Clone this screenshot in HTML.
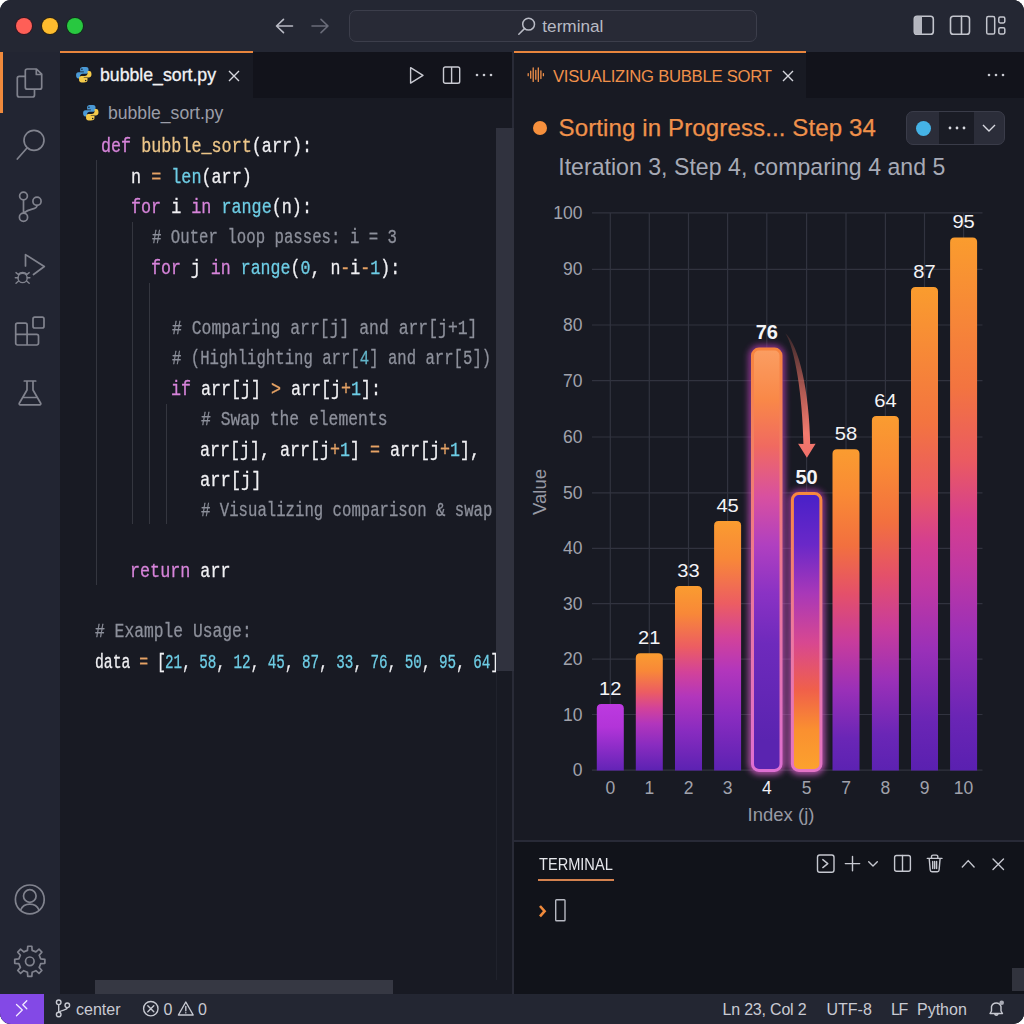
<!DOCTYPE html>
<html lang="en">
<head>
<meta charset="utf-8">
<title>bubble_sort.py — Visualizing Bubble Sort</title>
<style>
*{box-sizing:border-box;margin:0;padding:0}
html,body{width:1024px;height:1024px;background:#fff;overflow:hidden}
body{font-family:"Liberation Sans",sans-serif;color:#e8e8ec}
#win{position:absolute;left:0;top:0;width:1024px;height:1024px;background:#181a23;border-radius:11px;overflow:hidden}
.abs{position:absolute}
/* title bar */
#title{position:absolute;left:0;top:0;width:1024px;height:52px;background:#242733}
.tl{position:absolute;top:18px;width:16px;height:16px;border-radius:50%}
#search{position:absolute;left:349px;top:10px;width:408px;height:32px;border:1px solid #3c3e4b;border-radius:7px;background:#282a36}
#search span{position:absolute;left:192.300px;top:5px;font-size:17.200px;color:#b8bac4}
/* activity bar */
#act{position:absolute;left:0;top:52px;width:60px;height:942px;background:#222532}
#actind{position:absolute;left:0;top:52px;width:3px;height:61px;background:#f08a3c}
/* tab bars */
.tabbar{position:absolute;top:51.500px;height:46.500px;background:#12131b}
.tab{position:absolute;top:-.500px;height:47px;background:#181a23;border-top:2.500px solid #e8853d}
/* editor */
#edL{position:absolute;left:60px;top:98px;width:452px;height:896px;background:#181a23}
#mini{position:absolute;left:496px;top:127.500px;width:18px;height:543px;background:#30323e;z-index:2}
#split{position:absolute;left:511.800px;top:52px;width:2px;height:942px;background:#292b37}
#hscroll{position:absolute;left:95px;top:980px;width:298px;height:14px;background:#363843}
#edR{position:absolute;left:514px;top:98px;width:510px;height:742px;background:#181a23}
/* code */
.ln{position:absolute;white-space:pre;font-family:"Liberation Mono",monospace;font-size:20.500px;line-height:30px;height:30px;transform-origin:0 50%;transform:scaleX(.826);color:#f0f0f3;-webkit-text-stroke:.3px}
.k{color:#d784da}.f{color:#eec789}.o{color:#e6a365}.b{color:#6ecde5}.c{color:#8d909b}
.guide{position:absolute;width:1px;background:#34363f}
/* terminal */
#term{position:absolute;left:514px;top:840px;width:510px;height:154px;background:#11131a;border-top:2px solid #282a37}
/* status */
#status{position:absolute;left:0;top:994px;width:1024px;height:30px;background:#232632}
#remote{position:absolute;left:0;top:0;width:44px;height:30px;background:#8349e6}
.st{position:absolute;top:6.600px;font-size:16px;color:#c9cad3;white-space:nowrap}
.tk{font-size:17.500px;fill:#a0a2ac;font-family:"Liberation Sans",sans-serif}
.tk.w{fill:#f0f0f4}
.vl{font-size:17.500px;fill:#f4f4f7;font-family:"Liberation Sans",sans-serif}
.vl.b{font-weight:bold;font-size:20px}
.ax{font-size:18.500px;fill:#989aa5;font-family:"Liberation Sans",sans-serif}
svg{position:absolute;overflow:visible}
</style>
</head>
<body>
<div id="win">

<!-- TITLE BAR -->
<div id="title">
  <div class="tl" style="left:16px;background:#fe5f57;box-shadow:0 0 0 1px #3a1520"></div>
  <div class="tl" style="left:41.600px;background:#febc2e;box-shadow:0 0 0 1px #2d2310"></div>
  <div class="tl" style="left:67px;background:#28c840;box-shadow:0 0 0 1px #10301a"></div>
  <div id="search"><span>terminal</span></div>
  <!-- nav arrows -->
  <svg style="left:0;top:0" width="1024" height="52" viewBox="0 0 1024 52" fill="none" stroke-linecap="round" stroke-linejoin="round" stroke-width="1.600">
    <path d="M292.500 26H276.500M283.500 19.300L276.500 26L283.500 32.700" stroke="#b9bbc5"/>
    <path d="M312 26H328M321 19.300L328 26L321 32.700" stroke="#6a6c79"/>
    <circle cx="528.600" cy="24.200" r="5.900" stroke="#b9bbc5" stroke-width="1.500"/><path d="M524.500 28.600L518.800 34.300" stroke="#b9bbc5" stroke-width="1.500"/>
    <rect x="914.300" y="16.200" width="19" height="18" rx="2.800" stroke="#c3c5cd" stroke-width="1.600"/><path d="M914.300 19A2.800 2.800 0 0 1 917.100 16.200H922V34.200H917.100A2.800 2.800 0 0 1 914.300 31.400Z" fill="#b4b6bf" stroke="none"/>
    <rect x="950.500" y="16.200" width="19" height="18" rx="2.800" stroke="#c3c5cd" stroke-width="1.600"/><path d="M961.500 16.200V34.200" stroke="#c3c5cd" stroke-width="1.600"/>
    <rect x="986.700" y="16.600" width="8" height="17.400" rx="1.600" stroke="#c3c5cd" stroke-width="1.500"/><rect x="998.800" y="17" width="6" height="6" rx="1.400" stroke="#c3c5cd" stroke-width="1.500"/><rect x="998.800" y="27.800" width="6" height="6.200" rx="1.400" stroke="#c3c5cd" stroke-width="1.500"/>
  </svg>
</div>

<!-- ACTIVITY BAR -->
<div id="act"></div>
<div id="actind"></div>

<!-- ACTICONS -->
<svg id="acticons" style="left:0;top:0" width="60" height="1024" viewBox="0 0 60 1024" fill="none" stroke="#81838e" stroke-width="1.7" stroke-linecap="round" stroke-linejoin="round">
<path d="M17.300 78.300A2 2 0 0 1 19.300 76.300H25.200M17.300 78.300V95A2 2 0 0 0 19.300 97H32.500A2 2 0 0 0 34.500 95V90.200"/>
<path d="M27.300 69H36.500L41.700 74.200V87.200A2 2 0 0 1 39.700 89.200H27.300A2 2 0 0 1 25.300 87.200V71A2 2 0 0 1 27.300 69ZM36.300 69.300V74.500H41.500"/>
<circle cx="34" cy="140.300" r="10"/><path d="M27.200 147.800L17.300 159"/>
<circle cx="23.500" cy="196" r="3.900"/><circle cx="23.500" cy="217.200" r="4.100"/><circle cx="37" cy="201.200" r="4.100"/><path d="M23.500 200V213M37 205.400C37 210 30 208 24.500 212.500"/>
<path d="M25.500 266V254.600L44.300 266.500L33.500 274.500"/>
<g stroke-width="1.400"><circle cx="22.600" cy="278" r="4.600"/><path d="M18.500 274.300A5 4 0 0 1 26.800 274.300M18 277.800H15.300M18.600 281L16 283.300M18.600 274.800L16 272.600M27.200 277.800H29.900M26.600 281L29.200 283.300M26.600 274.800L29.200 272.600"/></g>
<path d="M17.500 323.200H25.300A1.800 1.800 0 0 1 27.100 325V334.400H36.700A1.800 1.800 0 0 1 38.500 336.200V343.200A1.800 1.800 0 0 1 36.700 345H17.500A1.800 1.800 0 0 1 15.700 343.200V325A1.800 1.800 0 0 1 17.500 323.200ZM15.700 334.400H27.100V345"/>
<rect x="33" y="317.200" width="11" height="10.800" rx="1.800"/>
<path d="M24.300 381H35.700M27 381V390L19.300 403.300A1 1 0 0 0 20.200 404.800H39.800A1 1 0 0 0 40.700 403.300L33 390V381M23.200 397.500H36.800"/>
<circle cx="29.800" cy="899.400" r="14.400"/><circle cx="29.800" cy="896" r="6.300"/><path d="M20.600 910A10 9.500 0 0 1 39 910"/>
<path d="M27.78 946.24L31.82 946.24L32.16 950.35L35.88 951.89L39.02 949.22L41.88 952.08L39.21 955.22L40.75 958.94L44.86 959.28L44.86 963.32L40.75 963.66L39.21 967.38L41.88 970.52L39.02 973.38L35.88 970.71L32.16 972.25L31.82 976.36L27.78 976.36L27.44 972.25L23.72 970.71L20.58 973.38L17.72 970.52L20.39 967.38L18.85 963.66L14.74 963.32L14.74 959.28L18.85 958.94L20.39 955.22L17.72 952.08L20.58 949.22L23.72 951.89L27.44 950.35Z"/><circle cx="29.800" cy="961.300" r="4.300"/>
</svg>
<!-- /ACTICONS -->

<!-- LEFT EDITOR -->
<div class="tabbar" style="left:60px;width:452px">
  <div class="tab" style="left:0;width:193px"></div>
</div>
<div id="edL"></div>
<div id="mini"></div>
<div id="split"></div>
<div id="hscroll"></div>



<!-- LEFT TAB CONTENT -->
<svg class="py" style="left:74.700px;top:65.800px" width="17.600" height="17.600" viewBox="0 0 32 32"><path d="M15.9 2c-3.6 0-6.6.9-6.600 3.900V10h6.800v1.300H6.300C3.300 11.300 2 13.600 2 16.900c0 3.500 1.200 5.800 4.200 5.800h2.900v-3.900c0-2.700 2.300-4.800 5-4.800h6.500c2.200 0 4-1.800 4-4V5.900c0-2.300-2.100-3.900-4.400-3.900zm-3.300 2.400a1.400 1.400 0 110 2.800 1.400 1.400 0 010-2.800z" fill="#4b9ad6"/><path d="M16.100 30c3.600 0 6.600-.9 6.600-3.900V22h-6.800v-1.300h9.800c3 0 4.300-2.300 4.300-5.600 0-3.500-1.200-5.800-4.200-5.800h-2.900v3.900c0 2.700-2.300 4.800-5 4.800h-6.500c-2.200 0-4 1.800-4 4v4.100c0 2.300 2.100 3.900 4.400 3.900zm3.300-2.400a1.400 1.400 0 110-2.800 1.400 1.400 0 010 2.800z" fill="#f5cb4a"/></svg>
<div class="abs" id="tabL" style="left:100px;top:64px;font-size:17.7px;-webkit-text-stroke:.3px;line-height:22px;color:#f2f2f5;white-space:nowrap">bubble_sort.py</div>
<svg style="left:228.300px;top:69.700px" width="12" height="12" viewBox="0 0 12 12"><path d="M1 1L11 11M11 1L1 11" stroke="#d6d7de" stroke-width="1.4" fill="none"/></svg>
<svg style="left:408px;top:66px" width="18" height="18" viewBox="0 0 18 18"><path d="M2.600 1.700L15 9.400L2.600 17.100Z" stroke="#c9cad2" stroke-width="1.400" fill="none" stroke-linejoin="round"/></svg>
<svg style="left:442px;top:66px" width="19" height="19" viewBox="0 0 19 19"><rect x="1.500" y="1" width="16.200" height="16.200" rx="1.800" stroke="#c9cad2" stroke-width="1.400" fill="none"/><path d="M9.600 1V17.200" stroke="#c9cad2" stroke-width="1.400"/></svg>
<svg style="left:475px;top:73px" width="18" height="4" viewBox="0 0 18 4"><circle cx="2" cy="2" r="1.300" fill="#c9cad2"/><circle cx="9" cy="2" r="1.300" fill="#c9cad2"/><circle cx="16" cy="2" r="1.300" fill="#c9cad2"/></svg>
<!-- BREADCRUMB -->
<svg class="py" style="left:82.200px;top:103.500px" width="17.600" height="17.600" viewBox="0 0 32 32"><path d="M15.9 2c-3.6 0-6.6.9-6.600 3.900V10h6.800v1.300H6.300C3.300 11.300 2 13.600 2 16.900c0 3.500 1.200 5.800 4.200 5.800h2.900v-3.900c0-2.700 2.300-4.800 5-4.800h6.500c2.200 0 4-1.800 4-4V5.900c0-2.300-2.100-3.900-4.400-3.900zm-3.300 2.400a1.400 1.400 0 110 2.800 1.400 1.400 0 010-2.800z" fill="#4b9ad6"/><path d="M16.100 30c3.600 0 6.600-.9 6.600-3.900V22h-6.800v-1.300h9.800c3 0 4.300-2.300 4.300-5.600 0-3.500-1.200-5.800-4.200-5.800h-2.900v3.900c0 2.700-2.300 4.800-5 4.800h-6.500c-2.200 0-4 1.800-4 4v4.100c0 2.300 2.100 3.900 4.400 3.900zm3.300-2.400a1.400 1.400 0 110-2.800 1.400 1.400 0 010 2.800z" fill="#f5cb4a"/></svg>
<div class="abs" id="crumb" style="left:108px;top:102px;font-size:17.6px;line-height:22px;color:#9b9da8;white-space:nowrap">bubble_sort.py</div>
<!-- GUIDES -->
<div class="guide" style="left:96px;top:160px;height:425px"></div>
<div class="guide" style="left:132px;top:222px;height:302px"></div>
<div class="guide" style="left:149px;top:283px;height:241px"></div>
<div class="guide" style="left:166px;top:404px;height:120px"></div>
<!-- CODE -->
<div id="code">
<div class="ln" style="left:100.9px;top:131.6px;transform:scaleX(0.817)"><span class="k">def</span> <span class="f">bubble_sort</span>(arr):</div>
<div class="ln" style="left:130.9px;top:162.6px;transform:scaleX(0.818)">n <span class="o">=</span> <span class="b">len</span>(arr)</div>
<div class="ln" style="left:131.0px;top:192.6px;transform:scaleX(0.817)"><span class="k">for</span> i <span class="k">in</span> <span class="b">range</span>(n):</div>
<div class="ln c" style="left:151.7px;top:222.6px;transform:scaleX(0.766)"># Outer loop passes: i = 3</div>
<div class="ln" style="left:150.7px;top:253.6px;transform:scaleX(0.810)"><span class="k">for</span> j <span class="k">in</span> <span class="b">range</span>(<span class="b">0</span>, n<span class="o">-</span>i<span class="o">-</span><span class="b">1</span>):</div>
<div class="ln c" style="left:171.9px;top:313.6px;transform:scaleX(0.801)"># Comparing arr[j] and arr[j+1]</div>
<div class="ln c" style="left:171.9px;top:343.6px;transform:scaleX(0.763)"># (Highlighting arr[<span style="color:#62b4c8">4</span>] and arr[5])</div>
<div class="ln" style="left:170.9px;top:374.6px;transform:scaleX(0.813)"><span class="k">if</span> arr[j] <span class="o">&gt;</span> arr[j<span class="o">+</span><span class="b">1</span>]:</div>
<div class="ln c" style="left:201.4px;top:404.6px;transform:scaleX(0.798)"># Swap the elements</div>
<div class="ln" style="left:200.4px;top:435.6px;transform:scaleX(0.813)">arr[j], arr[j<span class="o">+</span><span class="b">1</span>] <span class="o">=</span> arr[j<span class="o">+</span><span class="b">1</span>],</div>
<div class="ln" style="left:200.4px;top:465.6px;transform:scaleX(0.834)">arr[j]</div>
<div class="ln c" style="left:201.4px;top:495.6px;transform:scaleX(0.764)"># Visualizing comparison &amp; swap</div>
<div class="ln" style="left:129.8px;top:556.6px;transform:scaleX(0.817)"><span class="k">return</span> arr</div>
<div class="ln c" style="left:94.5px;top:616.6px;transform:scaleX(0.796)"># Example Usage:</div>
<div class="ln" id="d1" style="left:94.9px;top:647.6px;transform:scaleX(0.721)">data <span class="o">=</span> [</div>
<div class="ln" id="d2" style="left:165.1px;top:647.6px;transform:scaleX(0.696)"><span class="b">21</span>, <span class="b">58</span>, <span class="b">12</span>, <span class="b">45</span>, <span class="b">87</span>, <span class="b">33</span>, <span class="b">76</span>, <span class="b">50</span>, <span class="b">95</span>, <span class="b">64</span>]</div>
</div>

<!-- RIGHT EDITOR -->
<div class="tabbar" style="left:514px;width:510px">
  <div class="tab" style="left:0;width:292px"></div>
</div>
<div id="edR"></div>


<!-- RIGHT TAB CONTENT -->
<svg style="left:527px;top:66px" width="18" height="18" viewBox="0 0 18 18"><path d="M1.200 7.700V9.700M3.700 5.200V12.200M6.200 2V15.400M8.800 4.300V13.200M11.300 2V15.400M13.900 4.800V12.600M16.400 7.700V9.700" stroke="#f0904a" stroke-width="1.300" stroke-linecap="round" fill="none"/></svg>
<div class="abs" id="tabR" style="left:553px;top:65.500px;font-size:16.700px;letter-spacing:-.28px;line-height:22px;color:#f0904a;white-space:nowrap">VISUALIZING BUBBLE SORT</div>
<svg style="left:782px;top:69.500px" width="12" height="12" viewBox="0 0 12 12"><path d="M1 1L11 11M11 1L1 11" stroke="#d6d7de" stroke-width="1.400" fill="none"/></svg>
<svg style="left:987px;top:73px" width="18" height="4" viewBox="0 0 18 4"><circle cx="2" cy="2" r="1.300" fill="#c9cad2"/><circle cx="9" cy="2" r="1.300" fill="#c9cad2"/><circle cx="16" cy="2" r="1.300" fill="#c9cad2"/></svg>
<!-- HEADER -->
<div class="abs" style="left:532.500px;top:120.500px;width:14px;height:14px;border-radius:50%;background:#f6903d"></div>
<div class="abs" id="h1" style="left:558.500px;top:113px;font-size:24px;letter-spacing:.135px;-webkit-text-stroke:.25px;line-height:30px;color:#f0914b;white-space:nowrap">Sorting in Progress... Step 34</div>
<div class="abs" id="h2" style="left:558.200px;top:152px;font-size:23.050px;letter-spacing:.04px;line-height:30px;color:#a7aab6;white-space:nowrap">Iteration 3, Step 4, comparing 4 and 5</div>
<div class="abs" style="left:906px;top:111px;width:99px;height:34px;border:1px solid #3a3c49;border-radius:7px;background:#2b2d39;overflow:hidden">
  <div class="abs" style="left:32px;top:0;width:35px;height:34px;background:#1a1c25"></div>
  <div class="abs" style="left:9.300px;top:8.500px;width:15px;height:15px;border-radius:50%;background:#45b3e6"></div>
  <svg style="left:41px;top:14px" width="18" height="4" viewBox="0 0 18 4"><circle cx="2" cy="2" r="1.400" fill="#d8d9e0"/><circle cx="9" cy="2" r="1.400" fill="#d8d9e0"/><circle cx="16" cy="2" r="1.400" fill="#d8d9e0"/></svg>
  <svg style="left:75px;top:12px" width="14" height="8" viewBox="0 0 14 8"><path d="M1 1L7 7L13 1" stroke="#d8d9e0" stroke-width="1.400" fill="none"/></svg>
</div>
<!-- CHART -->
<svg id="chart" style="left:0;top:0" width="1024" height="1024" viewBox="0 0 1024 1024">
<defs>
<linearGradient id="gA" x1="0" y1="0" x2="0" y2="1"><stop offset="0" stop-color="#fa9c2e"/><stop offset=".28" stop-color="#f37440"/><stop offset=".42" stop-color="#ea5a62"/><stop offset=".53" stop-color="#d43e90"/><stop offset=".62" stop-color="#c038a2"/><stop offset=".75" stop-color="#9a30b8"/><stop offset=".9" stop-color="#6a25b5"/><stop offset="1" stop-color="#5a20b0"/></linearGradient>
<linearGradient id="gB" x1="0" y1="0" x2="0" y2="1"><stop offset="0" stop-color="#fa9c30"/><stop offset=".15" stop-color="#f88838"/><stop offset=".33" stop-color="#ec5d62"/><stop offset=".47" stop-color="#d2429a"/><stop offset=".6" stop-color="#b236bc"/><stop offset=".78" stop-color="#8a2cc0"/><stop offset="1" stop-color="#5c22b2"/></linearGradient>
<linearGradient id="g0" x1="0" y1="0" x2="0" y2="1"><stop offset="0" stop-color="#bd3ae0"/><stop offset=".35" stop-color="#b234d8"/><stop offset="1" stop-color="#6324b6"/></linearGradient>
<linearGradient id="g4" x1="0" y1="0" x2="0" y2="1"><stop offset="0" stop-color="#fb9e62"/><stop offset=".12" stop-color="#f98848"/><stop offset=".23" stop-color="#f06a60"/><stop offset=".35" stop-color="#d850a0"/><stop offset=".465" stop-color="#b040c0"/><stop offset=".58" stop-color="#8a32c4"/><stop offset=".7" stop-color="#6e2abc"/><stop offset=".93" stop-color="#5a24b0"/><stop offset="1" stop-color="#5a24b0"/></linearGradient>
<linearGradient id="g5" x1="0" y1="0" x2="0" y2="1"><stop offset="0" stop-color="#4820c8"/><stop offset=".185" stop-color="#6a28c8"/><stop offset=".36" stop-color="#a838b8"/><stop offset=".54" stop-color="#d84890"/><stop offset=".71" stop-color="#f0604a"/><stop offset=".855" stop-color="#fa9030"/><stop offset="1" stop-color="#fca22e"/></linearGradient>
<linearGradient id="gM" x1="0" y1="0" x2="0" y2="1"><stop offset="0" stop-color="#fa9c30"/><stop offset=".14" stop-color="#f98a35"/><stop offset=".3" stop-color="#f2703f"/><stop offset=".45" stop-color="#e4506a"/><stop offset=".6" stop-color="#c83c9c"/><stop offset=".75" stop-color="#9a30b8"/><stop offset=".9" stop-color="#6a26b6"/><stop offset="1" stop-color="#5c22b2"/></linearGradient>
<linearGradient id="gS4" x1="0" y1="0" x2="0" y2="1"><stop offset="0" stop-color="#f7843e"/><stop offset=".45" stop-color="#ee7a88"/><stop offset="1" stop-color="#dd6fd2"/></linearGradient>
<linearGradient id="gS5" x1="0" y1="0" x2="0" y2="1"><stop offset="0" stop-color="#f7883e"/><stop offset=".5" stop-color="#ec78a0"/><stop offset="1" stop-color="#e274c6"/></linearGradient>
<linearGradient id="gArr" gradientUnits="userSpaceOnUse" x1="0" y1="333" x2="0" y2="458"><stop offset="0" stop-color="#e8705c" stop-opacity=".15"/><stop offset=".45" stop-color="#ee7466" stop-opacity=".7"/><stop offset=".8" stop-color="#f27a6e" stop-opacity="1"/><stop offset="1" stop-color="#f0706a" stop-opacity="1"/></linearGradient><linearGradient id="gGl" x1="0" y1="0" x2="0" y2="1"><stop offset="0" stop-color="#a83aa8"/><stop offset="1" stop-color="#e060d0"/></linearGradient>
<filter id="glow" x="-80%" y="-10%" width="260%" height="120%"><feGaussianBlur stdDeviation="3"/></filter>
</defs>
<path d="M592 770.2H982.500M592 714.5H982.500M592 659.2H982.500M592 603.7H982.500M592 548.4H982.500M592 492.9H982.500M592 437.0H982.500M592 380.7H982.500M592 325.0H982.500M592 269.3H982.500M592 212.9H982.500M610.3 212.9V770.4M649.3 212.9V770.4M688.5 212.9V770.4M727.6 212.9V770.4M766.8 212.9V770.4M806.6 212.9V770.4M846.0 212.9V770.4M885.4 212.9V770.4M924.5 212.9V770.4M963.6 212.9V770.4" stroke="#31333f" stroke-width="1.200" fill="none"/>
<text x="582.500" y="776.2" text-anchor="end" class="tk">0</text>
<text x="582.500" y="720.5" text-anchor="end" class="tk">10</text>
<text x="582.500" y="665.2" text-anchor="end" class="tk">20</text>
<text x="582.500" y="609.7" text-anchor="end" class="tk">30</text>
<text x="582.500" y="554.4" text-anchor="end" class="tk">40</text>
<text x="582.500" y="498.9" text-anchor="end" class="tk">50</text>
<text x="582.500" y="443.0" text-anchor="end" class="tk">60</text>
<text x="582.500" y="386.7" text-anchor="end" class="tk">70</text>
<text x="582.500" y="331.0" text-anchor="end" class="tk">80</text>
<text x="582.500" y="275.3" text-anchor="end" class="tk">90</text>
<text x="582.500" y="218.9" text-anchor="end" class="tk">100</text>
<path d="M596.8 770.4V708.5Q596.8 704.0 601.3 704.0H619.3Q623.8 704.0 623.8 708.5V770.4Z" fill="url(#g0)"/>
<path d="M635.8 770.4V657.8Q635.8 653.3 640.3 653.3H658.3Q662.8 653.3 662.8 657.8V770.4Z" fill="url(#gB)"/>
<path d="M675.0 770.4V590.5Q675.0 586.0 679.5 586.0H697.5Q702.0 586.0 702.0 590.5V770.4Z" fill="url(#gB)"/>
<path d="M714.1 770.4V525.5Q714.1 521.0 718.6 521.0H736.6Q741.1 521.0 741.1 525.5V770.4Z" fill="url(#gB)"/>
<path d="M832.5 770.4V453.8Q832.5 449.3 837.0 449.3H855.0Q859.5 449.3 859.5 453.8V770.4Z" fill="url(#gM)"/>
<path d="M871.9 770.4V420.5Q871.9 416.0 876.4 416.0H894.4Q898.9 416.0 898.9 420.5V770.4Z" fill="url(#gM)"/>
<path d="M911.0 770.4V291.5Q911.0 287.0 915.5 287.0H933.5Q938.0 287.0 938.0 291.5V770.4Z" fill="url(#gA)"/>
<path d="M950.1 770.4V242.1Q950.1 237.6 954.6 237.6H972.6Q977.1 237.6 977.1 242.1V770.4Z" fill="url(#gA)"/>
<rect x="752.5" y="349.1" width="28.5" height="421.3" rx="7" fill="none" stroke="url(#gGl)" stroke-width="8" opacity=".8" filter="url(#glow)"/>
<rect x="752.5" y="349.1" width="28.5" height="421.3" rx="6.500" fill="url(#g4)" stroke="url(#gS4)" stroke-width="3"/>
<rect x="792.4" y="493.5" width="28.5" height="276.9" rx="7" fill="none" stroke="url(#gGl)" stroke-width="8" opacity=".8" filter="url(#glow)"/>
<rect x="792.4" y="493.5" width="28.5" height="276.9" rx="6.500" fill="url(#g5)" stroke="url(#gS5)" stroke-width="3"/>
<path d="M785.300 333.200C799 345 809.500 392 810.200 444L815.600 443.800L806.900 457.800L798.100 443.800L803.400 444C802.600 396 795 348 785.300 333.200Z" fill="url(#gArr)"/>
<text transform="translate(610.3 694.6) scale(1.15 1)" text-anchor="middle" class="vl">12</text>
<text transform="translate(649.3 643.9) scale(1.15 1)" text-anchor="middle" class="vl">21</text>
<text transform="translate(688.5 576.6) scale(1.15 1)" text-anchor="middle" class="vl">33</text>
<text transform="translate(727.6 511.6) scale(1.15 1)" text-anchor="middle" class="vl">45</text>
<text x="766.8" y="339.1" text-anchor="middle" class="vl b">76</text>
<text x="806.6" y="483.5" text-anchor="middle" class="vl b">50</text>
<text transform="translate(846.0 439.9) scale(1.15 1)" text-anchor="middle" class="vl">58</text>
<text transform="translate(885.4 406.6) scale(1.15 1)" text-anchor="middle" class="vl">64</text>
<text transform="translate(924.5 277.6) scale(1.15 1)" text-anchor="middle" class="vl">87</text>
<text transform="translate(963.6 228.2) scale(1.15 1)" text-anchor="middle" class="vl">95</text>
<text x="610.3" y="793.700" text-anchor="middle" class="tk">0</text>
<text x="649.3" y="793.700" text-anchor="middle" class="tk">1</text>
<text x="688.5" y="793.700" text-anchor="middle" class="tk">2</text>
<text x="727.6" y="793.700" text-anchor="middle" class="tk">3</text>
<text x="766.8" y="793.700" text-anchor="middle" class="tk w">4</text>
<text x="806.6" y="793.700" text-anchor="middle" class="tk">5</text>
<text x="846.0" y="793.700" text-anchor="middle" class="tk">7</text>
<text x="885.4" y="793.700" text-anchor="middle" class="tk">8</text>
<text x="924.5" y="793.700" text-anchor="middle" class="tk">9</text>
<text x="963.6" y="793.700" text-anchor="middle" class="tk">10</text>
<text x="781" y="821" text-anchor="middle" class="ax">Index (j)</text>
<text transform="translate(546 492) rotate(-90)" text-anchor="middle" class="ax">Value</text>
</svg>
<!-- /CHART -->

<!-- TERMINAL -->
<div id="term">
  <div class="abs" id="termlbl" style="left:25px;top:12px;font-size:16.500px;transform-origin:0 50%;transform:scaleX(.884);line-height:20px;color:#e6e7ec;white-space:nowrap">TERMINAL</div>
  <div class="abs" style="left:23.500px;top:37.200px;width:76.500px;height:2.200px;background:#d4824f"></div>
  <svg style="left:-514px;top:-842px" width="1024" height="1024" viewBox="0 0 1024 1024" fill="none" stroke="#c6c8d0" stroke-width="1.400" stroke-linecap="round" stroke-linejoin="round">
    <rect x="817.500" y="855" width="16.500" height="17.200" rx="2.200"/><path d="M822.800 859.600L827.800 863.600L822.800 867.600"/>
    <path d="M845.300 863.600H859.700M852.500 856.400V870.800"/>
    <path d="M868.700 861.800L873 866L877.300 861.800"/>
    <rect x="894.600" y="855.500" width="15.800" height="15.800" rx="2"/><path d="M902.500 855.500V871.300"/>
    <path d="M927.300 858.400H942M929.200 858.400L930.200 870A1.800 1.800 0 0 0 932 871.700H937.300A1.800 1.800 0 0 0 939.100 870L940.100 858.400M931.500 858.200V856.600A1.500 1.500 0 0 1 933 855.100H936.300A1.500 1.500 0 0 1 937.800 856.600V858.200M932.700 861.500V868.500M934.650 861.500V868.500M936.600 861.500V868.500"/>
    <path d="M962.300 867L968.200 860.600L974.100 867"/>
    <path d="M993 859L1003.500 869.500M1003.500 859L993 869.500"/>
    <path d="M540 906L544.600 911.200L540 916.400" stroke="#f08a3c" stroke-width="2.600" stroke-linecap="butt" stroke-linejoin="miter"/>
    <rect x="555.700" y="899.800" width="9.300" height="21" rx=".8" stroke="#b7b9c2" stroke-width="1.400"/>
  </svg>
</div>

<div class="abs" style="left:1012px;top:968px;width:12px;height:23px;background:#31333d"></div>
<div class="abs" style="left:496px;top:670px;width:1px;height:310px;background:#20222c"></div>

<!-- STATUS BAR -->
<div id="status">
  <div id="remote"></div>
  <svg style="left:0;top:-994px" width="1024" height="1024" viewBox="0 0 1024 1024" fill="none" stroke="#c6c8d0" stroke-width="1.400" stroke-linecap="round" stroke-linejoin="round">
    <path d="M16.500 1004.500L22.300 1010L16.500 1015.800M26.800 1000.800L22.800 1004.800L26.800 1008.800" stroke="#f3eaff" stroke-width="1.300"/>
    <circle cx="58.700" cy="1002.300" r="2.300"/><circle cx="58.700" cy="1014.500" r="2.300"/><circle cx="67.300" cy="1005.300" r="2.300"/><path d="M58.700 1004.600V1012.200M67.300 1007.600C67.300 1010.500 62 1009.500 59.300 1012"/>
    <circle cx="150.800" cy="1008.700" r="7.200"/><path d="M147.800 1005.700L153.800 1011.700M153.800 1005.700L147.800 1011.700"/>
    <path d="M185.800 1002L193.200 1015H178.400Z"/><path d="M185.800 1006.500V1010.800M185.800 1012.700V1012.900"/>
    <path d="M990 1013.500H1002.500L1001 1011V1006.500A5 5 0 0 0 991.500 1006.500V1011ZM994.700 1014A1.700 1.700 0 0 0 998 1014"/><circle cx="1001.700" cy="1002.800" r="2.300" fill="#a9abb5" stroke="none"/>
  </svg>
  <div class="st" id="st1" style="left:76px">center</div>
  <div class="st" id="st2" style="left:163.500px">0</div>
  <div class="st" id="st3" style="left:198px">0</div>
  <div class="st" id="st4" style="left:722.500px;letter-spacing:-.2px">Ln 23, Col 2</div>
  <div class="st" id="st5" style="left:826.500px">UTF-8</div>
  <div class="st" id="st6" style="left:891px;letter-spacing:-1.500px">LF</div>
  <div class="st" id="st7" style="left:917px">Python</div>
</div>

</div>
</body>
</html>
